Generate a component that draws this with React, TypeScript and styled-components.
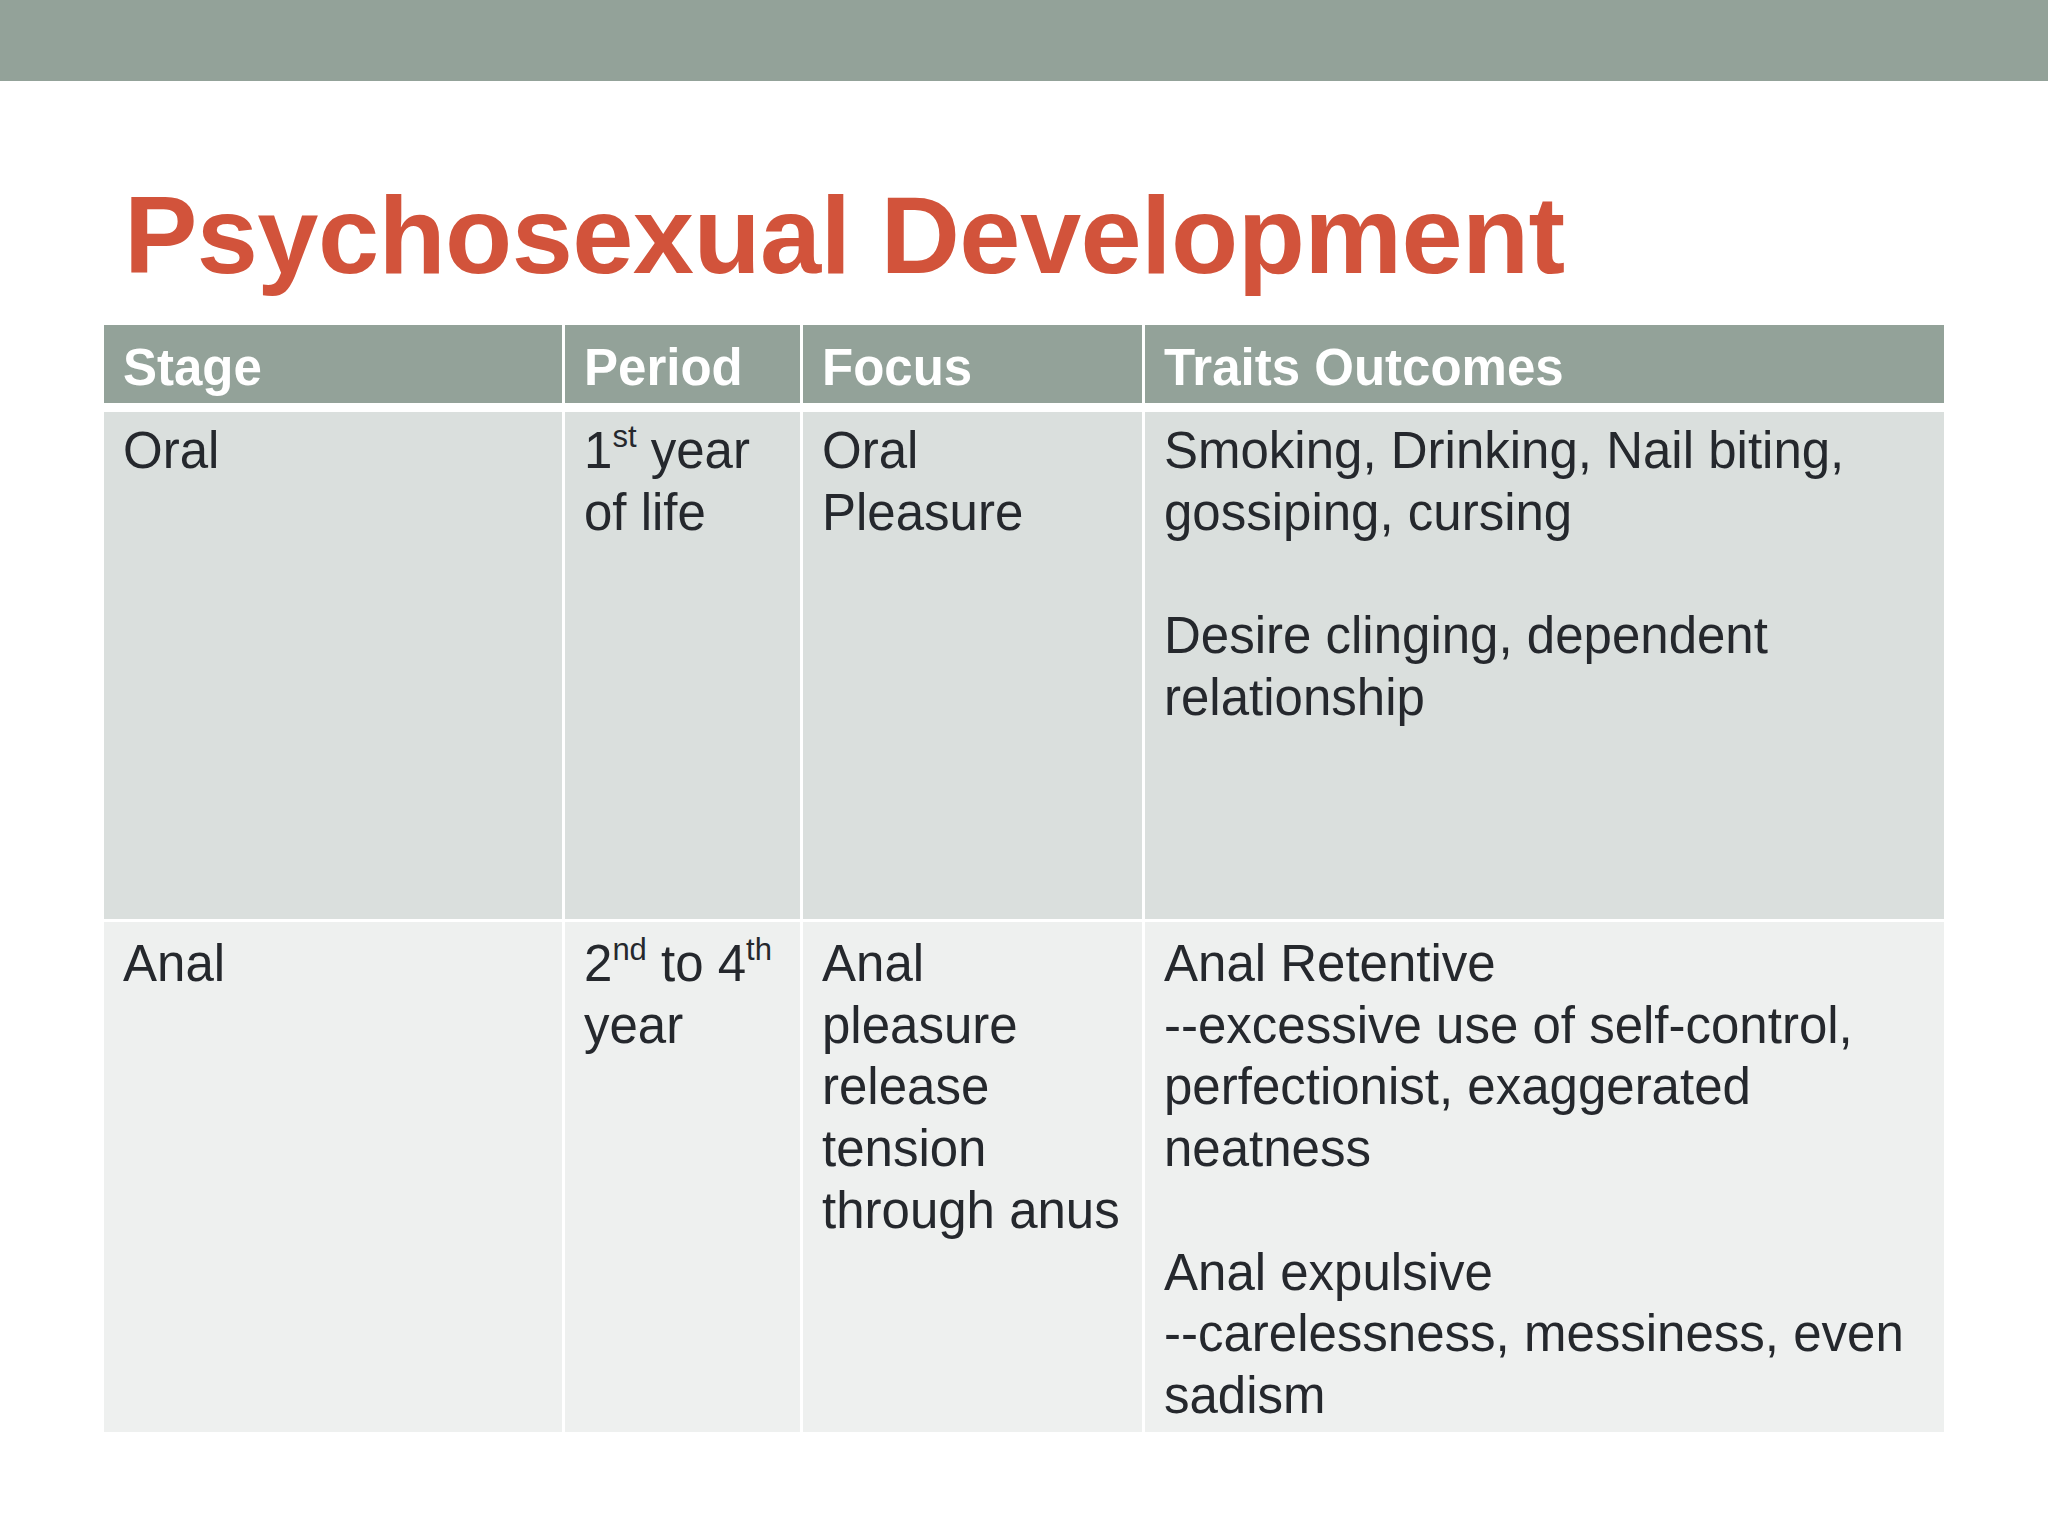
import styled, { createGlobalStyle } from 'styled-components';

const GlobalStyle = createGlobalStyle`
    html, body {
        margin: 0;
        padding: 0;
        background: #ffffff;
    }
    body {
        font-family: 'Liberation Sans', Arial, sans-serif;
    }
`;

const Slide = styled.div`
    width: 2048px;
    height: 1536px;
    background: #ffffff;
    overflow: hidden;
`;

const TopBar = styled.div`
    height: 81px;
    background: #93a299;
`;

const Content = styled.main`
    padding: 0 104px;
`;

const Title = styled.h1`
    margin: 99px 0 35px 20px;
    font-size: 110px;
    line-height: 110px;
    font-weight: 700;
    letter-spacing: -0.6px;
    color: #d2533b;
`;

const Table = styled.div`
    width: 1840px;
    display: flex;
    flex-direction: column;
    gap: 3px;
`;

const Row = styled.div<{ $height: number; $header?: boolean }>`
    display: grid;
    grid-template-columns: 458px 235px 339px 799px;
    column-gap: 3px;
    height: ${(p) => p.$height}px;
    margin-bottom: ${(p) => (p.$header ? '6px' : '0')};
`;

const padTop = { head: 12, dark: 8, light: 11 };

const Cell = styled.div<{ $tone: 'head' | 'dark' | 'light' }>`
    box-sizing: border-box;
    padding: ${(p) => padTop[p.$tone]}px 8px 0 19px;
    font-size: 51px;
    line-height: 61.7px;
    font-weight: ${(p) => (p.$tone === 'head' ? 700 : 400)};
    color: ${(p) => (p.$tone === 'head' ? '#ffffff' : '#25282d')};
    background: ${(p) =>
        p.$tone === 'head' ? '#93a299' : p.$tone === 'dark' ? '#dadfdd' : '#eef0ef'};
    white-space: nowrap;
`;

const Sup = styled.sup`
    font-size: 31px;
    line-height: 0;
    vertical-align: 21px;
`;

const Blank = styled.div`
    height: 61.7px;
`;

const headers = ['Stage', 'Period', 'Focus', 'Traits Outcomes'];

export default function App() {
    return (
        <Slide>
            <GlobalStyle />
            <TopBar />
            <Content>
                <Title>Psychosexual Development</Title>
                <Table>
                    <Row $height={78} $header>
                        {headers.map((h) => (
                            <Cell key={h} $tone="head">
                                {h}
                            </Cell>
                        ))}
                    </Row>
                    <Row $height={507}>
                        <Cell $tone="dark">Oral</Cell>
                        <Cell $tone="dark">
                            1<Sup>st</Sup> year
                            <br />
                            of life
                        </Cell>
                        <Cell $tone="dark">
                            Oral
                            <br />
                            Pleasure
                        </Cell>
                        <Cell $tone="dark">
                            Smoking, Drinking, Nail biting,
                            <br />
                            gossiping, cursing
                            <Blank />
                            Desire clinging, dependent
                            <br />
                            relationship
                        </Cell>
                    </Row>
                    <Row $height={510}>
                        <Cell $tone="light">Anal</Cell>
                        <Cell $tone="light">
                            2<Sup>nd</Sup> to 4<Sup>th</Sup>
                            <br />
                            year
                        </Cell>
                        <Cell $tone="light">
                            Anal
                            <br />
                            pleasure
                            <br />
                            release
                            <br />
                            tension
                            <br />
                            through anus
                        </Cell>
                        <Cell $tone="light">
                            Anal Retentive
                            <br />
                            --excessive use of self-control,
                            <br />
                            perfectionist, exaggerated
                            <br />
                            neatness
                            <Blank />
                            Anal expulsive
                            <br />
                            --carelessness, messiness, even
                            <br />
                            sadism
                        </Cell>
                    </Row>
                </Table>
            </Content>
        </Slide>
    );
}
